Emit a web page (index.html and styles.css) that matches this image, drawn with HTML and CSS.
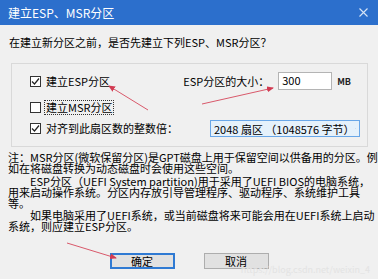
FILE: index.html
```html
<!DOCTYPE html>
<html lang="zh-CN">
<head>
<meta charset="utf-8">
<title>建立ESP、MSR分区</title>
<link rel="stylesheet" href="styles.css">
</head>
<body>
<div class="window">
  <div class="titlebar">
    <span class="title">建立ESP、MSR分区</span>
    <svg class="close" width="9" height="9" viewBox="0 0 9 9"><path d="M0.5 0.5 L8.5 8.5 M8.5 0.5 L0.5 8.5" stroke="#d6e4f6" stroke-width="1.1" fill="none"/></svg>
  </div>
  <div class="content">
    <p class="prompt">在建立新分区之前，是否先建立下列ESP、MSR分区？</p>
    <div class="group">
      <div class="row row1">
        <div class="check">
          <span class="box"><svg width="9" height="9" viewBox="0 0 9 9"><path d="M1 4.5 L3.5 7 L8 1.5" stroke="#222" stroke-width="1.2" fill="none"/></svg></span>
          <span class="lbl">建立ESP分区</span>
        </div>
        <div class="size">
          <span class="size-lbl">ESP分区的大小：</span>
          <span class="input">300</span>
          <span class="unit">MB</span>
        </div>
      </div>
      <div class="row row2">
        <div class="check">
          <span class="box"></span>
          <span class="lbl focus">建立MSR分区</span>
        </div>
      </div>
      <div class="row row3">
        <div class="check">
          <span class="box"><svg width="9" height="9" viewBox="0 0 9 9"><path d="M1 4.5 L3.5 7 L8 1.5" stroke="#222" stroke-width="1.2" fill="none"/></svg></span>
          <span class="lbl">对齐到此扇区数的整数倍：</span>
        </div>
        <div class="select">
          <span>2048 扇区 （1048576 字节）</span>
          <svg width="8" height="5" viewBox="0 0 8 5"><path d="M0.5 0.5 L4 4 L7.5 0.5" stroke="#7a8a99" stroke-width="1" fill="none"/></svg>
        </div>
      </div>
    </div>
    <div class="notes">
      <p class="para"><span class="line">注：MSR分区(微软保留分区)是GPT磁盘上用于保留空间以供备用的分区。例</span><span class="line">如在将磁盘转换为动态磁盘时会使用这些空间。</span></p>
      <p class="para p2"><span class="line indent">ESP分区（UEFI System partition)用于采用了UEFI BIOS的电脑系统，</span><span class="line">用来启动操作系统。分区内存放引导管理程序、驱动程序、系统维护工具</span><span class="line">等。</span></p>
      <p class="para p3"><span class="line indent">如果电脑采用了UEFI系统，或当前磁盘将来可能会用在UEFI系统上启动</span><span class="line">系统，则应建立ESP分区。</span></p>
    </div>
    <div class="buttons">
      <button class="btn default">确定</button>
      <button class="btn">取消</button>
    </div>
    <div class="watermark">https://blog.csdn.net/weixin_4</div>
  </div>
  <svg class="annot" width="378" height="279" viewBox="0 0 378 279">
    <defs>
      <marker id="ah" markerWidth="7" markerHeight="6" refX="6" refY="3" orient="auto" markerUnits="userSpaceOnUse">
        <path d="M0 0 L7 3 L0 6 Z" fill="#d23b52"/>
      </marker>
    </defs>
    <line x1="148" y1="110" x2="109" y2="86" stroke="#d9596b" stroke-width="1" marker-end="url(#ah)"/>
    <line x1="202" y1="104" x2="273" y2="88" stroke="#d9596b" stroke-width="1" marker-end="url(#ah)"/>
    <line x1="67" y1="243" x2="116" y2="258" stroke="#d9596b" stroke-width="1" marker-end="url(#ah)"/>
  </svg>
</div>
</body>
</html>
```

FILE: styles.css
```css
html, body {
  margin: 0;
  padding: 0;
}
body {
  width: 378px;
  height: 279px;
  overflow: hidden;
  background: #f0f0f0;
}
.window {
  position: relative;
  width: 378px;
  height: 279px;
  background: #f0f0f0;
  font-family: "Noto Sans CJK SC", "Liberation Sans", sans-serif;
  font-size: 11px;
  color: #000;
  overflow: hidden;
}
.titlebar {
  height: 25px;
  background: #2c6fcc;
  display: flex;
  align-items: center;
  justify-content: space-between;
  padding: 0 10px 0 8px;
  box-sizing: border-box;
}
.title {
  color: #fff;
  font-size: 12px;
  line-height: 14px;
}
.close {
  display: block;
}
.content {
  display: flex;
  flex-direction: column;
}
.prompt {
  margin: 10px 0 0 9px;
  line-height: 14px;
  white-space: nowrap;
}
.group {
  margin: 14px 10px 0 11px;
  border: 1px solid #d9d9d9;
  padding: 8px 7px 8px 18px;
  display: flex;
  flex-direction: column;
  height: 84px;
  box-sizing: border-box;
}
.row {
  display: flex;
  align-items: center;
  justify-content: space-between;
}
.row1 { height: 18px; }
.row2 { height: 14px; margin-top: 10px; }
.row3 { height: 17px; margin-top: 6px; }
.check {
  display: flex;
  align-items: center;
  gap: 3px;
}
.box {
  width: 11px;
  height: 11px;
  box-sizing: border-box;
  border: 1px solid #333;
  background: #fff;
  display: flex;
  align-items: center;
  justify-content: center;
}
.box svg { display: block; }
.lbl {
  line-height: 13px;
  white-space: nowrap;
  padding: 0 1px;
  border: 1px solid transparent;
}
.lbl.focus {
  border: 1px dotted #333;
}
.size {
  display: flex;
  align-items: center;
  margin-right: 9px;
}
.size-lbl {
  white-space: nowrap;
  margin-right: 9px;
}
.input {
  width: 54px;
  height: 18px;
  box-sizing: border-box;
  border: 1px solid #b4b4b4;
  background: #fff;
  padding-left: 3px;
  line-height: 14px;
}
.unit {
  margin-left: 5px;
  font-size: 9px;
  font-weight: bold;
  color: #222;
}
.select {
  width: 150px;
  height: 17px;
  box-sizing: border-box;
  border: 1px solid #69a7e8;
  background: #e5f1fb;
  display: flex;
  align-items: center;
  justify-content: space-between;
  padding: 0 3px 0 3px;
  white-space: nowrap;
}
.select svg { display: block; }
.notes {
  margin: 5px 0 0 8px;
}
.para {
  margin: 0;
}
.para.p2 {
  margin-top: 2px;
}
.para.p3 {
  margin-top: 1px;
}
.line {
  display: block;
  line-height: 11px;
  height: 11px;
  white-space: nowrap;
}
.indent {
  padding-left: 22px;
}
.buttons {
  display: flex;
  justify-content: center;
  gap: 29px;
  margin-top: 21px;
}
.btn {
  width: 65px;
  height: 16px;
  box-sizing: border-box;
  background: #e1e1e1;
  border: 1px solid #adadad;
  font-family: "Noto Sans CJK SC", sans-serif;
  font-size: 11px;
  line-height: 12px;
  padding: 0;
  color: #000;
}
.btn.default {
  border: 2px solid #2f7ad3;
}
.watermark {
  position: absolute;
  right: 8px;
  bottom: 3px;
  font-size: 9px;
  color: #e3e3e3;
  white-space: nowrap;
}
.annot {
  position: absolute;
  left: 0;
  top: 0;
  pointer-events: none;
}
```
